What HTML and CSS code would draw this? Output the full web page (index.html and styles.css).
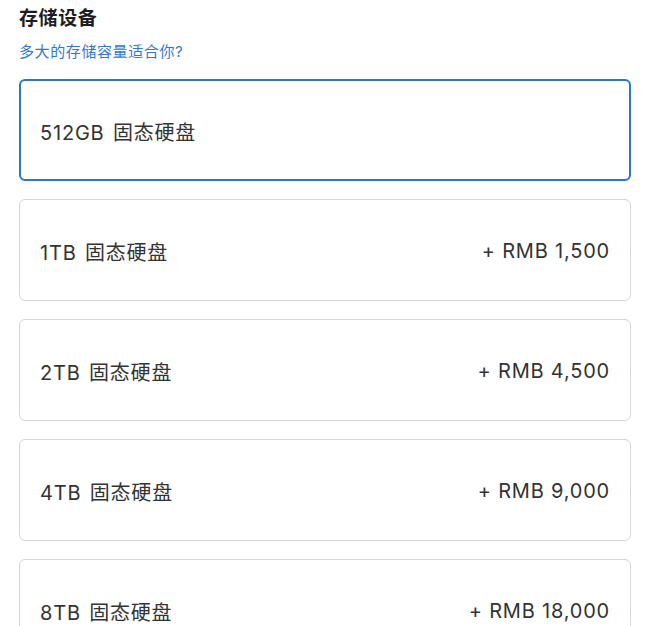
FILE: index.html
```html
<!DOCTYPE html>
<html lang="zh-CN">
<head>
<meta charset="utf-8">
<link rel="stylesheet" href="styles.css">
</head>
<body>
<div class="page">
  <h2 class="title">存储设备</h2>
  <a class="help" href="#">多大的存储容量适合你?</a>
  <div class="options">
    <div class="option selected"><span class="name">512GB 固态硬盘</span></div>
    <div class="option"><span class="name">1TB 固态硬盘</span><span class="price">+ RMB 1,500</span></div>
    <div class="option"><span class="name">2TB 固态硬盘</span><span class="price">+ RMB 4,500</span></div>
    <div class="option"><span class="name">4TB 固态硬盘</span><span class="price">+ RMB 9,000</span></div>
    <div class="option"><span class="name">8TB 固态硬盘</span><span class="price">+ RMB 18,000</span></div>
  </div>
</div>
</body>
</html>
```
FILE: styles.css
```css
html, body {
  margin: 0;
  padding: 0;
  background: #fff;
  overflow: hidden;
}
body {
  font-family: Inter, "Noto Sans CJK SC", sans-serif;
  color: #1d1d1f;
}
.page {
  padding: 7px 19px 0 19px;
  width: 612px;
  height: 619px;
  overflow: hidden;
}
.title {
  margin: 0;
  font-size: 19px;
  font-weight: 600;
  line-height: 24px;
  letter-spacing: 0.6px;
  color: #1d1d1f;
}
.help {
  display: block;
  margin-top: 11px;
  font-size: 15px;
  line-height: 20px;
  letter-spacing: 0.6px;
  color: #3277cc;
  text-decoration: none;
}
.options {
  margin-top: 17px;
  display: flex;
  flex-direction: column;
  gap: 18px;
}
.option {
  box-sizing: border-box;
  flex: none;
  height: 102px;
  border: 1px solid #d6d6d6;
  border-radius: 6px;
  display: flex;
  align-items: center;
  justify-content: space-between;
  padding: 2px 20px 0 20px;
  font-size: 20px;
  color: #333;
}
.option.selected {
  border: 2px solid #2e73cf;
  padding: 2px 19px 0 19px;
}
.name {
  letter-spacing: 0.8px;
  word-spacing: 2px;
}
.price {
  letter-spacing: 0.8px;
}
```
